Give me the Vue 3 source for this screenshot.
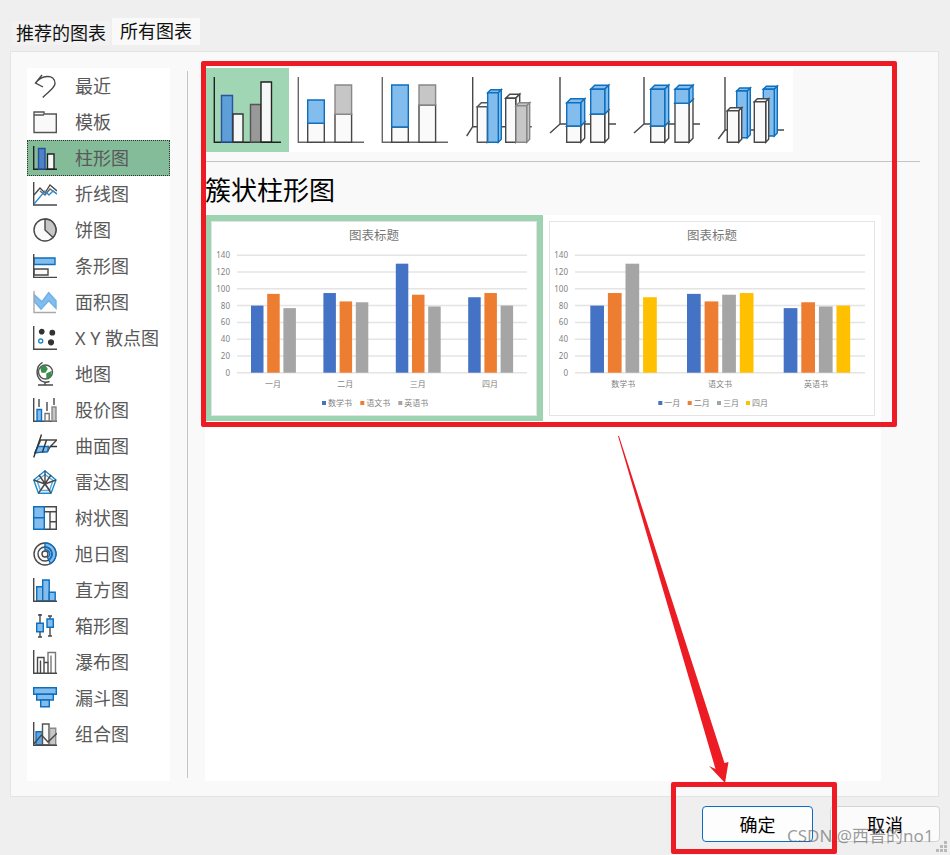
<template>
  <div class="dialog">
    <div class="tabs">
      <div class="tab">推荐的图表</div>
      <div class="tab tab--active">所有图表</div>
    </div>

    <div class="panel">
      <ul class="side">
        <li v-for="(item, i) in chartTypes" :key="item.name" class="side__row" :class="{ 'side__row--on': i === 2 }">
          <svg class="side__icon" width="24" height="24" viewBox="0 0 24 24">
            <path
              v-for="(s, k) in item.icon"
              :key="k"
              :d="s.d"
              :fill="s.fill"
              :stroke="s.stroke"
              stroke-width="1.4"
            />
          </svg>
          <span class="side__text">{{ item.name }}</span>
        </li>
      </ul>
      <div class="split"></div>

      <div class="main">
        <div class="strip">
          <div v-for="(t, i) in thumbs" :key="i" class="thumb" :class="{ 'thumb--on': i === 0 }">
            <svg width="84" height="84" viewBox="0 0 84 84">
              <path
                v-for="(s, k) in t"
                :key="k"
                :d="s.d"
                :fill="s.fill"
                :stroke="s.stroke"
                stroke-width="1.4"
              />
            </svg>
          </div>
        </div>
        <div class="rule"></div>
        <h2 class="title">簇状柱形图</h2>

        <div class="previews">
          <div v-for="(c, i) in charts" :key="i" class="preview" :class="{ 'preview--on': i === 0 }">
            <svg class="chart" width="326" height="195" viewBox="0 0 326 195">
              <text x="163" y="19" text-anchor="middle" class="chart__title">图表标题</text>
              <g v-for="n in 8" :key="n">
                <line x1="26" x2="316" :y1="gridY(n - 1)" :y2="gridY(n - 1)" stroke="#e4e4e4" stroke-width="1.5" />
                <text x="19" :y="gridY(n - 1) + 3" text-anchor="end" class="chart__tick">{{ (n - 1) * 20 }}</text>
              </g>
              <rect
                v-for="(b, k) in barsOf(c)"
                :key="k"
                :x="b.x"
                :y="b.y"
                :width="c.barW"
                :height="b.h"
                :fill="b.color"
              />
              <text
                v-for="(g, k) in c.groups"
                :key="g.label"
                :x="c.labelX[k]"
                y="166"
                text-anchor="middle"
                class="chart__tick"
              >{{ g.label }}</text>
              <g v-for="l in c.legend" :key="l.name">
                <rect :x="l.x" y="180" width="4" height="4" :fill="l.color" />
                <text :x="l.x + 6" y="185" class="chart__tick">{{ l.name }}</text>
              </g>
            </svg>
          </div>
        </div>
      </div>
    </div>

    <div class="footer">
      <button class="btn btn--primary">确定</button>
      <button class="btn">取消</button>
    </div>

    <!-- 红色标注 -->
    <div class="mark mark--top"></div>
    <div class="mark mark--ok"></div>
    <svg class="arrow" width="950" height="855" viewBox="0 0 950 855">
      <polygon points="618,436 619,436 724.5,763 728.5,762 725,783 709,766 715.5,769" fill="#ed1c24" />
    </svg>
    <div class="watermark">CSDN @西普的no1</div>
    <svg class="grip" width="15" height="15" viewBox="0 0 15 15">
      <path d="M9 1h3v3H9zM5 5h3v3H5zM9 5h3v3H9zM1 9h3v3H1zM5 9h3v3H5zM9 9h3v3H9z" fill="#b9b9b9" />
    </svg>
  </div>
</template>

<script setup>
const DARK = '#484848'
const BLUE = '#0e6fbf'
const SKY = '#83bdee'
const GREY = '#c6c6c6'
const PAPER = '#fafafa'

const p = (d, fill = 'none', stroke = DARK) => ({ d, fill, stroke })
const dot = (x, y, r) => `M${x - r} ${y}a${r} ${r} 0 1 0 ${r * 2} 0a${r} ${r} 0 1 0 ${-r * 2} 0Z`
const rect = (x, y, w, h) => `M${x} ${y}h${w}v${h}h${-w}Z`

const chartTypes = [
  { name: '最近', icon: [p('M9 1L2.5 9L10 13M2.5 9C8 1.5 22 -1 22 9.5C22 14 15 18 9.7 23.5')] },
  { name: '模板', icon: [p('M1 22.5V2H11V4H23.3V22.5Z M1 5H11', '#f9f9f9', '#555')] },
  {
    name: '柱形图',
    icon: [
      p('M.7 0V23.2H24', 'none', '#222'),
      p(rect(5.5, 2.5, 6.5, 20.5), '#4f81c4', '#24509f'),
      p(rect(14.5, 8, 6.5, 15), '#f7f7f7', '#222')
    ]
  },
  {
    name: '折线图',
    icon: [
      p('M.7 0V23H24'),
      p('M1 13L7 6L12 11L17 3L24 9'),
      p('M7 9L12 13L17 7L24 12', 'none', '#666'),
      p('M1 22L12 9L16 13L20 9L24 12', 'none', '#2a8fd6')
    ]
  },
  {
    name: '饼图',
    icon: [
      p(dot(12, 12, 11), '#fafafa'),
      p('M12 12L12 1A11 11 0 0 1 20 19.5Z', GREY)
    ]
  },
  {
    name: '条形图',
    icon: [
      p(rect(1, 4, 21, 6.5), SKY, BLUE),
      p(rect(1, 15, 14, 6), PAPER),
      p('M.7 0V24M.7 23.5H24')
    ]
  },
  {
    name: '面积图',
    icon: [
      p('M1.5 5L9 11.7L15.7 2.7L23 10.7V18.3L15.7 10.7L8 19.3L1.5 11.7Z', SKY, '#6fb0e6'),
      p('M1 1V22.5H23', 'none', '#aaa')
    ]
  },
  {
    name: 'X Y 散点图',
    icon: [
      p('M.7 0V23.3H24'),
      p(dot(8.7, 5.7, 2.2), '#333', '#333'),
      p(dot(19.3, 6.7, 2.2), '#333', '#333'),
      p(dot(18, 16.3, 2.4), '#333', '#333'),
      p(dot(7.7, 15, 2), '#fff', '#1e87d0')
    ]
  },
  {
    name: '地图',
    icon: [
      p(dot(12.5, 10, 7), '#fff', '#555'),
      p('M8 6L12 4L14 7L12 10L9 10ZM14 12L18 10L17 15L14 16Z', '#3a8f4a', '#3a8f4a'),
      p('M9.5 .5C3 4 2 14 8.5 19C11 20.5 14 20.5 16.5 19.5M12 20V23M5 23H20')
    ]
  },
  {
    name: '股价图',
    icon: [
      p('M.7 0V23.3H24'),
      p(rect(4, 11.5, 4.5, 11.5), SKY, BLUE),
      p(rect(12, 15.5, 4.2, 7.5), PAPER, '#777'),
      p(rect(19, 9, 4, 14), GREY, '#888'),
      p('M6 1V9M14 4V13M21 0V7')
    ]
  },
  {
    name: '曲面图',
    icon: [
      p('M7.7 6H23.7L17 13L14.5 17.7L2 18.7Z', '#fafafa'),
      p('M5 12.5H15.5L14.5 17.7L2 18.7Z', SKY, BLUE),
      p('M13.5 6L9.5 18M8.5 .5L.7 23.5M17 12.5H24', 'none', '#333')
    ]
  },
  {
    name: '雷达图',
    icon: [
      p('M12 .8L23 10L18 23.2H5.5L.7 10Z', '#fff', '#1689cf'),
      p('M12 4.5L20 10.5L16.5 20.5H7.5L4 10.5Z', 'none', '#5aa8dc'),
      p('M12 .8V14M12 14L23 10M12 14L18 23.2M12 14L5.5 23.2M12 14L.7 10M7 21L18 5M17 21L6 5')
    ]
  },
  {
    name: '树状图',
    icon: [
      p(rect(.7, .7, 22.6, 22.6), PAPER),
      p(rect(.7, .7, 10.6, 11), SKY, BLUE),
      p(rect(.7, 11.7, 10.6, 11.6), SKY, BLUE),
      p('M11.3 5.7H23.3M17 5.7V23.3M17 15.7H23.3')
    ]
  },
  {
    name: '旭日图',
    icon: [
      p(dot(12, 12, 11), '#fafafa'),
      p('M12 1A11 11 0 0 1 17.5 21.5L14.5 15.5A4 4 0 0 0 12 8Z', SKY, BLUE),
      p(dot(12, 12, 7)),
      p(dot(12, 12, 3)),
      p('M12 5A7 7 0 0 1 15.5 18', 'none', BLUE)
    ]
  },
  {
    name: '直方图',
    icon: [
      p(rect(3.7, 8.7, 6, 14.3), SKY, BLUE),
      p(rect(9.7, 2, 6.5, 21), SKY, BLUE),
      p(rect(16.2, 14.3, 6, 8.7), SKY, BLUE),
      p('M.7 0V23.2H24')
    ]
  },
  {
    name: '箱形图',
    icon: [
      p('M7 0V23M5 1H9M5 23H9M17 2V22M15 2H19M15 22H19'),
      p(rect(3.7, 9.3, 6.6, 8.4), SKY, BLUE),
      p(rect(14, 5, 6.3, 8.3), SKY, BLUE)
    ]
  },
  {
    name: '瀑布图',
    icon: [
      p('M15 12.5V2.5H22.5V23', 'none', '#777'),
      p('M18 23V5.5', 'none', '#777'),
      p('M.7 0V23.2H24M4.5 23V7.5H11V23M11 12.5H15V23M7.5 23V10.5')
    ]
  },
  {
    name: '漏斗图',
    icon: [
      p(rect(.7, 1.7, 22.6, 6.6), SKY, BLUE),
      p(rect(3.7, 8.3, 16.6, 5.7), SKY, BLUE),
      p(rect(7.7, 14, 8.6, 6.7), SKY, BLUE)
    ]
  },
  {
    name: '组合图',
    icon: [
      p(rect(3, 9.7, 7, 13.3), '#5ea5e3', BLUE),
      p(rect(9.5, 2, 6.5, 21), '#fafafa', '#555'),
      p(rect(16.5, 6.3, 6.2, 16.7), GREY, '#888'),
      p('M.7 0V23.2H24M.7 22L8.5 13L15 20L24 11.3')
    ]
  }
]

// 立体柱子：正面 + 顶面 + 侧面
const box = (x, top, w, bottom, d, fill, stroke) => [
  p(`M${x} ${top}l${d} ${-d}h${w}l${-d} ${d}Z`, fill, stroke),
  p(`M${x + w} ${top}l${d} ${-d}V${bottom - d}L${x + w} ${bottom}Z`, fill, stroke),
  p(rect(x, top, w, bottom - top), fill, stroke)
]
const axis3d = (x, y, endX, diagX, diagY) => p(`M${x} 9V${y}M${x} ${y}H${endX}M${x} ${y}L${diagX} ${diagY}`)

const thumbs = [
  [
    p('M9.3 9V74.3H76', 'none', '#222'),
    p(rect(16.5, 27.5, 11, 46.5), '#5e9fd8', '#2a52a0'),
    p(rect(28, 46, 10, 28), '#f5f8f7', '#333'),
    p(rect(45.5, 36.5, 10.5, 37.5), '#999', '#555'),
    p(rect(56, 14, 10.5, 60), '#f5f8f7', '#222')
  ],
  [
    p('M9.3 9V74.3H75', 'none', '#666'),
    p(rect(18.7, 55.3, 16.6, 19), PAPER),
    p(rect(18.7, 32, 16.6, 23.3), SKY, BLUE),
    p(rect(46, 46.3, 16.6, 28), PAPER),
    p(rect(46, 17, 16.6, 29.3), GREY, '#888')
  ],
  [
    p('M9.3 9V74.3H75', 'none', '#666'),
    p(rect(18.7, 59, 16.6, 15.3), PAPER),
    p(rect(18.7, 17, 16.6, 42), SKY, BLUE),
    p(rect(46, 37, 16.6, 37.3), PAPER),
    p(rect(46, 17, 16.6, 20), GREY, '#888')
  ],
  [
    axis3d(15.7, 58.7, 74.7, 9.7, 68),
    ...box(20.3, 38.7, 10, 74.3, 4, PAPER, '#555'),
    ...box(30.7, 24.7, 10.6, 74.3, 3, SKY, BLUE),
    ...box(48.7, 30.3, 10, 74.3, 4, PAPER, DARK),
    ...box(59, 37.7, 10.7, 74.3, 3, GREY, '#888')
  ],
  [
    axis3d(19, 56, 75, 9, 65),
    ...box(25.7, 58, 14, 74.3, 4, PAPER),
    ...box(25.7, 34.7, 14, 58, 4, SKY, BLUE),
    ...box(49.7, 46, 14, 74.3, 4, PAPER),
    ...box(49.7, 21.3, 14, 46, 4, SKY, BLUE)
  ],
  [
    axis3d(19, 56, 75, 9, 65),
    ...box(25.7, 58, 14, 74.3, 4, PAPER),
    ...box(25.7, 21.3, 14, 58, 4, SKY, BLUE),
    ...box(50, 35.3, 14, 74.3, 4, PAPER),
    ...box(50, 21.3, 14, 35.3, 4, SKY, BLUE)
  ],
  [
    axis3d(16, 62, 75, 9.3, 71),
    ...box(27.7, 23, 10.6, 69.7, 3, SKY, BLUE),
    ...box(54.3, 21.3, 11, 68, 3, SKY, BLUE),
    ...box(18.3, 42.7, 11.4, 74.3, 3, PAPER),
    ...box(45.3, 33.7, 11.4, 74.3, 3, PAPER)
  ]
]

const COLORS = ['#4472c4', '#ed7d31', '#a5a5a5', '#ffc000']

const charts = [
  {
    barW: 12.5,
    barStep: 16.2,
    groupStart: 40,
    groupStep: 72.4,
    labelX: [62, 134.3, 206.7, 279],
    groups: [
      { label: '一月', values: [80, 94, 77] },
      { label: '二月', values: [95, 85, 84] },
      { label: '三月', values: [130, 93, 79] },
      { label: '四月', values: [90, 95, 80] }
    ],
    legend: [
      { name: '数学书', x: 111, color: COLORS[0] },
      { name: '语文书', x: 149.3, color: COLORS[1] },
      { name: '英语书', x: 187.3, color: COLORS[2] }
    ]
  },
  {
    barW: 13.7,
    barStep: 17.6,
    groupStart: 41.3,
    groupStep: 96.7,
    labelX: [74.3, 171, 267],
    groups: [
      { label: '数学书', values: [80, 95, 130, 90] },
      { label: '语文书', values: [94, 85, 93, 95] },
      { label: '英语书', values: [77, 84, 79, 80] }
    ],
    legend: [
      { name: '一月', x: 109.3, color: COLORS[0] },
      { name: '二月', x: 138.7, color: COLORS[1] },
      { name: '三月', x: 168, color: COLORS[2] },
      { name: '四月', x: 197, color: COLORS[3] }
    ]
  }
]

const BASE_Y = 151.7
const UNIT = 117.4 / 140

const gridY = (i) => BASE_Y - i * 20 * UNIT

const barsOf = (c) =>
  c.groups.flatMap((g, gi) =>
    g.values.map((v, vi) => ({
      x: c.groupStart + gi * c.groupStep + vi * c.barStep,
      y: BASE_Y - v * UNIT,
      h: v * UNIT,
      color: COLORS[vi]
    }))
  )
</script>

<style scoped>
.dialog {
  position: relative;
  box-sizing: border-box;
  width: 950px;
  height: 855px;
  padding-top: 18px;
  overflow: hidden;
  background: #efefef;
  font-family: 'Noto Sans', 'Noto Sans CJK SC', sans-serif;
}

.tabs {
  display: flex;
  align-items: flex-end;
  gap: 2px;
  height: 27px;
  margin: 0 0 6px 12px;
}

.tab {
  height: 24px;
  padding: 0 4px;
  font-size: 18px;
  line-height: 24px;
  color: #111;
  background: #f2f2f2;
}

.tab--active {
  height: 27px;
  padding: 0 8px 0 8px;
  line-height: 27px;
  background: #f9f9f9;
}

.panel {
  display: flex;
  box-sizing: border-box;
  width: 929px;
  height: 746px;
  margin-left: 10px;
  padding: 16px 0 0 16px;
  background: #f9f9f9;
  border: 1px solid #e4e4e4;
}

.side {
  width: 143px;
  height: 713px;
  margin: 0;
  padding: 0;
  list-style: none;
  background: #fff;
}

.side__row {
  display: flex;
  align-items: center;
  box-sizing: border-box;
  height: 36px;
  padding-left: 6px;
  font-size: 18px;
  color: #595959;
  white-space: nowrap;
}

.side__row--on {
  background: #84bc99;
  outline: 1px dotted #333;
  outline-offset: -1px;
}

.side__icon {
  flex: none;
  margin-right: 18px;
}

.side__text {
  margin-top: -2px;
}

.split {
  flex: none;
  width: 1px;
  height: 707px;
  margin: 3px 17px 0 17px;
  background: #c4c4c4;
}

.main {
  width: 715px;
}

.strip {
  display: flex;
  width: 588px;
  background: #fff;
}

.thumb {
  width: 84px;
  height: 84px;
}

.thumb--on {
  background: #a1d6b4;
}

.rule {
  height: 1px;
  margin-top: 9px;
  background: #c4c4c4;
}

.title {
  height: 53px;
  margin: 0;
  font-size: 26px;
  font-weight: 400;
  line-height: 56px;
  color: #000;
}

.previews {
  display: flex;
  align-items: flex-start;
  width: 676px;
  height: 566px;
  background: #fff;
}

.preview {
  box-sizing: border-box;
  width: 338px;
  height: 206px;
  padding: 6px 6px 5px;
}

.preview--on {
  background: #9dd3b1;
}

.chart {
  display: block;
  background: #fff;
  outline: 1px solid #e4e4e4;
  outline-offset: -1px;
}

.chart__title {
  font-size: 12.5px;
  fill: #777;
}

.chart__tick {
  font-size: 8px;
  fill: #7f7f7f;
}

.footer {
  display: flex;
  justify-content: flex-end;
  gap: 17px;
  width: 940px;
  margin-top: 9px;
}

.btn {
  width: 111px;
  height: 36px;
  padding: 0;
  font-family: inherit;
  font-size: 18px;
  color: #000;
  background: #fbfbfb;
  border: 1px solid #d4d4d4;
  border-radius: 4px;
}

.btn:last-child {
  width: 110px;
}

.btn--primary {
  border-color: #0a6cc4;
  background: #fdfdfd;
}

/* 标注层 */
.mark {
  position: absolute;
  box-sizing: border-box;
  border: 5px solid #ed1c24;
  border-radius: 2px;
}

.mark--top {
  left: 201px;
  top: 61px;
  width: 696px;
  height: 366px;
}

.mark--ok {
  left: 671px;
  top: 782px;
  width: 166px;
  height: 72px;
}

.arrow {
  position: absolute;
  left: 0;
  top: 0;
  pointer-events: none;
}

.watermark {
  position: absolute;
  left: 787px;
  top: 825px;
  font-size: 17px;
  line-height: 22px;
  color: rgba(90, 90, 90, 0.6);
  white-space: nowrap;
}

.grip {
  position: absolute;
  right: 0;
  bottom: 0;
}
</style>

<style>
html,
body {
  margin: 0;
  background: #efefef;
}
</style>
